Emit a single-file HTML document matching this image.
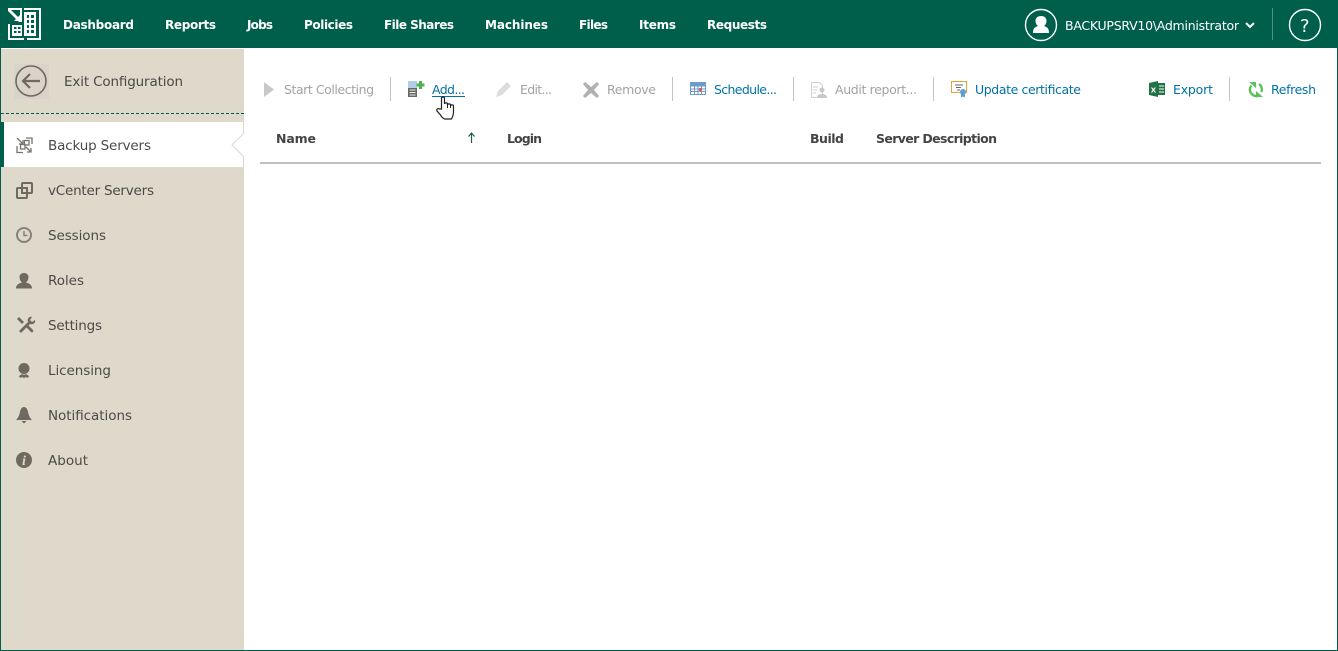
<!DOCTYPE html>
<html lang="en"><head><meta charset="utf-8"><title>Backup Servers</title>
<style>
html,body{margin:0;padding:0;background:#fff;width:1338px;height:651px;overflow:hidden}
svg{display:block}
text{font-family:"DejaVu Sans","Liberation Sans",sans-serif;font-size:12.5px}
.n{font-weight:bold;font-size:12px;fill:#fff}
.s{fill:#4a4a46;font-size:13.5px}
.d{fill:#a3a3a3;font-size:12.5px}
.b{fill:#0072a8;font-size:12.5px}
.h{font-weight:bold;fill:#444;font-size:12.5px}
.sep{stroke:#c4c4c4;stroke-width:1}
</style></head><body>
<svg width="1338" height="651" viewBox="0 0 1338 651" xmlns="http://www.w3.org/2000/svg">
<rect width="1338" height="651" fill="#fff"/>
<rect x="1" y="49" width="243" height="601" fill="#dfd9cc"/>
<rect width="1338" height="48" fill="#005f4b"/>
<rect x="0" y="48" width="1" height="603" fill="#005f4b"/>
<rect x="1337" y="48" width="1" height="603" fill="#005f4b"/>
<rect x="0" y="650" width="1338" height="1" fill="#005f4b"/>

<!-- logo -->
<g fill="#fff">
<path d="M8 8h14v14h-2V10H8z"/>
<path d="M8 10h3l10 10-1 2h-1L8 11z"/>
<path d="M14 21l7-7v7z"/>
<path d="M24 8h17v32H27v-2h12V10H24z"/>
<path d="M24 12h12v24H24zM27 15v3h2v-3zm4 0v3h3v-3zm-4 5v3h2v-3zm4 0v3h3v-3zm-4 5v3h2v-3zm4 0v3h3v-3zm-4 5v3h2v-3zm4 0v3h3v-3z" fill-rule="evenodd"/>
<path d="M8 24h2v14h14v2H8z"/>
<path d="M12 25h10v11H12zM14 27v2h2.500v-2zm4 0v2h2.500v-2zm-4 4v2h2.500v-2zm4 0v2h2.500v-2z" fill-rule="evenodd"/>
</g>

<text class="n" x="63" y="29" textLength="71">Dashboard</text>
<text class="n" x="165" y="29" textLength="51">Reports</text>
<text class="n" x="247" y="29" textLength="26">Jobs</text>
<text class="n" x="304" y="29" textLength="49">Policies</text>
<text class="n" x="384" y="29" textLength="70">File Shares</text>
<text class="n" x="485" y="29" textLength="63">Machines</text>
<text class="n" x="579" y="29" textLength="29">Files</text>
<text class="n" x="639" y="29" textLength="37">Items</text>
<text class="n" x="707" y="29" textLength="60">Requests</text>

<!-- user -->
<circle cx="1041" cy="25" r="15.5" fill="none" stroke="#fff" stroke-width="1.4"/>
<path d="M1033 33c0-5 2-6 5-7-1.500-1-2.500-3-2.500-5 0-3 2-5 5.500-5s5.500 2 5.500 5c0 2-1 4-2.500 5 3 1 5 2 5 7z" fill="#fff"/>
<text x="1065" y="30" textLength="174" fill="#fff" style="font-size:12.5px">BACKUPSRV10\Administrator</text>
<path d="M1246 23l4 4 4-4" fill="none" stroke="#fff" stroke-width="2"/>
<rect x="1272" y="8" width="1" height="32" fill="#4d8f80"/>
<circle cx="1305" cy="25" r="15.5" fill="none" stroke="#fff" stroke-width="1.400"/>
<text x="1300" y="32" fill="#fff" style="font-size:18px">?</text>

<!-- sidebar top -->
<rect x="14" y="64" width="35" height="35" fill="#dad3c9"/>
<circle cx="31" cy="81" r="15" fill="none" stroke="#6e6a60" stroke-width="1.600"/>
<path d="M40 81H23M30 74l-7 7 7 7" fill="none" stroke="#6e6a60" stroke-width="2.200"/>
<text x="64" y="86" class="s" textLength="119">Exit Configuration</text>
<line x1="1" y1="113.500" x2="244" y2="113.500" stroke="#005f4b" stroke-dasharray="3 2"/>
<rect x="1" y="122" width="243" height="45" fill="#fff"/>
<rect x="1" y="122" width="3" height="45" fill="#005f4b"/>
<path d="M243.500 122V133.500L232 145 243.500 156.500V167" fill="none" stroke="#dfd9cc"/>

<!-- sidebar icons -->
<g fill="none" stroke="#77736a" stroke-width="1.300">
<path d="M17 138l6 6M23 140v4h-4M26 147l5 5M31 148v4h-4M26 138h6v6M17 146v6.500h6"/>
<rect x="20.500" y="144.500" width="4.500" height="4.500"/>
<rect x="24.500" y="140.500" width="4.500" height="4.500"/>
</g>
<path d="M22 188v-4a1 1 0 0 1 1-1h8a1 1 0 0 1 1 1v8a1 1 0 0 1-1 1h-4v4a1 1 0 0 1-1 1h-8a1 1 0 0 1-1-1v-8a1 1 0 0 1 1-1zM22 188h5v5h-5z" fill="none" stroke="#6e6a60" stroke-width="2"/>
<circle cx="24" cy="235" r="7" fill="none" stroke="#85827a" stroke-width="2"/>
<path d="M24 231v4.500h3.500" fill="none" stroke="#85827a" stroke-width="1.500"/>
<g fill="#6e6a60">
<path d="M16 288.500c0-4 3-5 6-6-1.800-1.500-2.500-3.500-2.500-5.500 0-2.500 2-4 4.500-4s4.500 1.500 4.500 4c0 2-.7 4-2.500 5.500 3 1 6 2 6 6z"/>
<path d="M17 319l2-2 5 5-2 2zM19 331l9-9c-1-3 1-6 4-5l-2 3 2 2 3-2c1 3-2 5-5 4l-9 9zM26 327l2-2 5 5c1 2-1 3-2 2z"/>
<circle cx="24" cy="368.500" r="5.500"/><path d="M19 376l3-2 2 1 2-1 3 2-1 2-2-1-2 1-2-1-2 1z"/>
<path d="M16 420c2-2 3-4 4-8 .5-3 2-5 4-5s3.500 2 4 5c1 4 2 6 4 8zM21.500 421h5l-2.500 2.500z"/>
<circle cx="24" cy="460" r="8"/>
</g>
<text x="24" y="465" text-anchor="middle" fill="#dfd9cc" style="font-family:'Liberation Serif',serif;font-size:14px;font-weight:bold;font-style:italic">i</text>

<text class="s" x="48" y="150" textLength="103">Backup Servers</text>
<text class="s" x="48" y="195" textLength="106">vCenter Servers</text>
<text class="s" x="48" y="240" textLength="58">Sessions</text>
<text class="s" x="48" y="285" textLength="36">Roles</text>
<text class="s" x="48" y="330" textLength="54">Settings</text>
<text class="s" x="48" y="375" textLength="63">Licensing</text>
<text class="s" x="48" y="420" textLength="84">Notifications</text>
<text class="s" x="48" y="465" textLength="40">About</text>

<!-- toolbar -->
<path d="M264 82l10 7.500-10 7.500z" fill="#c8c8c8"/>
<text class="d" x="284" y="94" textLength="90">Start Collecting</text>
<line class="sep" x1="390.500" y1="77" x2="390.500" y2="101"/>
<rect x="408" y="81" width="9" height="16" fill="#666"/>
<rect x="408" y="81" width="9" height="7" fill="#b3cfe8"/>
<path d="M409.500 90h6M409.500 92.500h6M409.500 95h6" stroke="#eee"/>
<path d="M419 81h3v2.500h2.500v3H422V89h-3v-2.500h-2.500v-3H419z" fill="#4eb24e"/>
<text x="432" y="94" fill="#0072a8" textLength="33" style="font-size:12.500px">Add...</text>
<rect x="432" y="96" width="33" height="1" fill="#0072a8"/>
<path d="M496 97l2-6 9-9 4 4-9 9z" fill="#dcdcdc"/>
<text class="d" x="520" y="94" textLength="32">Edit...</text>
<path d="M585 82l6 5 6-5 2 2-5 6 5 6-2 2-6-5-6 5-2-2 5-6-5-6z" fill="#b0b0b0"/>
<text class="d" x="607" y="94" textLength="49">Remove</text>
<line class="sep" x1="672.500" y1="77" x2="672.500" y2="101"/>
<rect x="690" y="82" width="16" height="13" fill="#6d9bcb"/>
<path d="M691 86.500h14v7.500h-14z" fill="#fff"/>
<path d="M691 89h14M691 91.500h14M694.500 86v8M698 86v8M701.500 86v8" stroke="#6d9bcb" stroke-width="1"/>
<rect x="699" y="88" width="3" height="3" fill="#ef5a3a"/>
<text class="b" x="714" y="94" textLength="63">Schedule...</text>
<line class="sep" x1="793.500" y1="77" x2="793.500" y2="101"/>
<path d="M811.500 82.500h8l3 3v12h-11z" fill="none" stroke="#d0d0d0"/>
<path d="M813 87h5M813 90h4M813 93h3" stroke="#d0d0d0"/>
<circle cx="822" cy="90" r="2.500" fill="#c8c8c8"/><path d="M817 98c0-3 2-4 5-4s5 1 5 4z" fill="#c8c8c8"/>
<text class="d" x="835" y="94" textLength="82">Audit report...</text>
<line class="sep" x1="933.500" y1="77" x2="933.500" y2="101"/>
<rect x="951.500" y="81.500" width="15" height="11" fill="none" stroke="#e0a33c"/>
<path d="M955 85h8M956 87.500h5M957 90h3" stroke="#666"/>
<circle cx="963" cy="92" r="3" fill="#5ea0d0"/><path d="M961 94v3.500l2-1 2 1V94z" fill="#5ea0d0"/>
<text class="b" x="975" y="94" textLength="106">Update certificate</text>

<path d="M1149 83l9-2v16l-9-2z" fill="#217346"/>
<rect x="1158" y="83" width="7" height="12" fill="#217346"/>
<path d="M1159 86h5M1159 89h5M1159 92h5" stroke="#fff"/>
<text x="1153.500" y="92.500" text-anchor="middle" fill="#fff" style="font-size:7px;font-weight:bold">X</text>
<text class="b" x="1173" y="94" textLength="40">Export</text>
<line class="sep" x1="1229.500" y1="77" x2="1229.500" y2="101"/>
<g fill="none" stroke="#5cc05c" stroke-width="2.400">
<path d="M1259 84a7 7 0 0 1 2.500 8M1258 96a7 7 0 0 1-8-5c-.4-2 .2-4 1.500-5.500"/>
</g>
<path d="M1249 82h7v6zM1263 97h-7v-6z" fill="#5cc05c"/>
<text class="b" x="1271" y="94" textLength="45">Refresh</text>

<!-- cursor -->
<path d="M441.500 109V98.500c0-2 3-2 3 0V104c0-1.500 3-1.500 3 0v1c0-1.500 3-1.500 3 0v1c0-1.500 3-1.500 3 0v6c0 3-1 5-2 7h-7c-2-1-3-2-4-4l-3.500-4c-1-2 1-3 2.500-2z" fill="#fff" stroke="#222" stroke-width="1.200"/>
<path d="M447.500 104v4M450.500 105v3" fill="none" stroke="#222"/>

<!-- table head -->
<text class="h" x="276" y="143" textLength="40">Name</text>
<path d="M471.500 143v-9M468.500 136.500l3-3.500 3 3.500" fill="none" stroke="#1f5f4b" stroke-width="1.200"/>
<text class="h" x="507" y="143" textLength="35">Login</text>
<text class="h" x="810" y="143" textLength="34">Build</text>
<text class="h" x="876" y="143" textLength="121">Server Description</text>
<rect x="260" y="162" width="1061" height="2" fill="#c0c0c0"/>
</svg>
</body></html>
